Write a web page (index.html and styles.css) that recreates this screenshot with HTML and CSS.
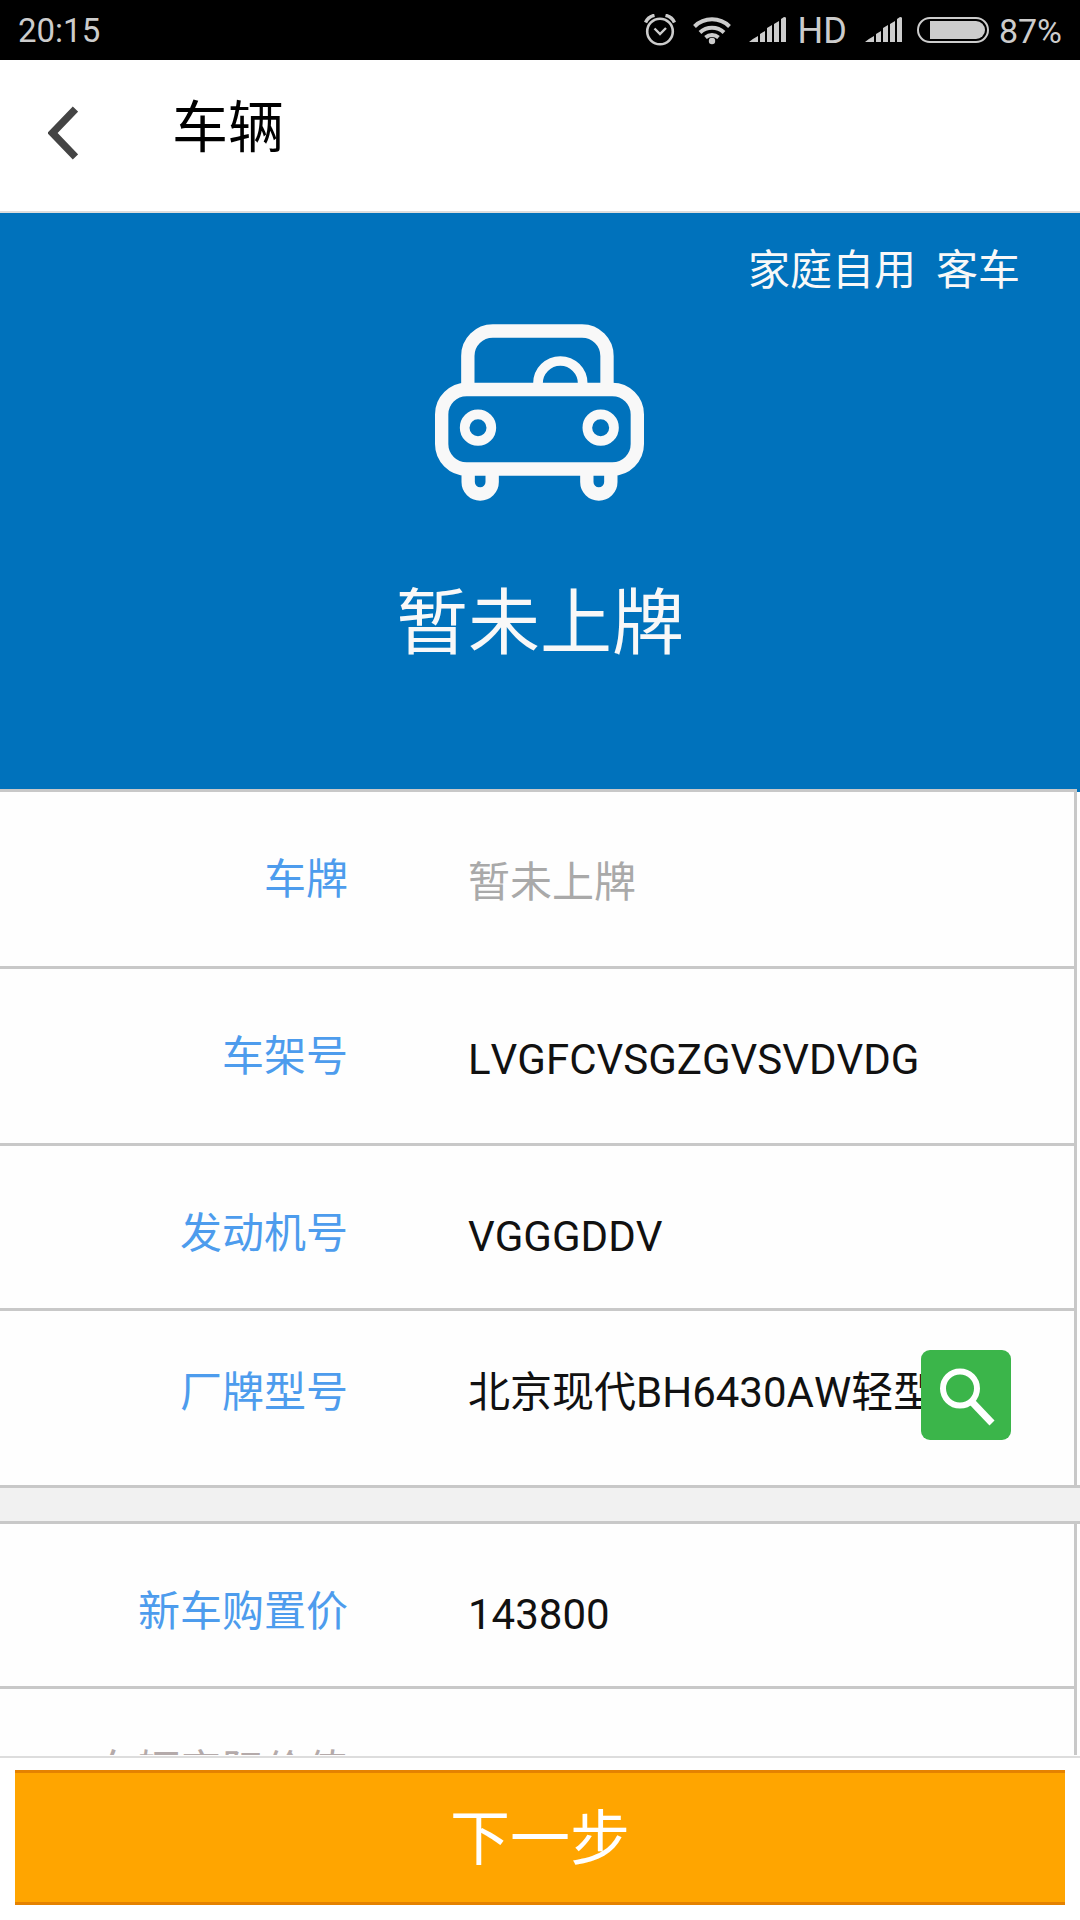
FILE: index.html
```html
<!DOCTYPE html>
<html lang="zh-CN">
<head>
<meta charset="utf-8">
<meta name="viewport" content="width=device-width">
<title>车辆</title>
<link rel="stylesheet" href="styles.css">
</head>
<body>
<div class="status">
  <span class="status-text time">20:15</span>
  <div class="status-icons">
    <svg class="alarm" viewBox="0 0 32 32" width="32" height="32" fill="none" stroke="currentColor" stroke-width="2.6"><circle cx="16" cy="17.500" r="12.800"/><path d="M10.500 14.500l5.500 5.500 6-6" stroke-width="2.400"/><path d="M1.500 8.500C3 5 6.500 2.200 10.500 1.300M21.500 1.300C25.500 2.200 29 5 30.500 8.500" stroke-width="3.400"/></svg>
    <svg class="wifi" viewBox="0 0 38 30" width="38" height="30" fill="none" stroke="currentColor" stroke-width="4"><path d="M1.500 11.500a25 25 0 0 1 35 0M7 17.500a17.500 17.500 0 0 1 24 0M12.500 22.500a10 10 0 0 1 13 0"/><circle cx="19" cy="26" r="3.200" fill="currentColor" stroke="none"/></svg>
    <svg class="signal" viewBox="0 0 37 26" width="37" height="26" fill="currentColor"><path d="M0 25Q5 21 9 19V25ZM11 17l5-3V25h-5ZM18 11l5-3V25h-5ZM25 7l5-3V25h-5ZM32 2l3-2q2 0 2 1V25h-5Z"/></svg>
    <span class="status-text hd">HD</span>
    <svg class="signal" viewBox="0 0 37 26" width="37" height="26" fill="currentColor"><path d="M0 25Q5 21 9 19V25ZM11 17l5-3V25h-5ZM18 11l5-3V25h-5ZM25 7l5-3V25h-5ZM32 2l3-2q2 0 2 1V25h-5Z"/></svg>
    <svg class="battery" viewBox="0 0 72 26" width="72" height="26"><rect x="1" y="1" width="70" height="24" rx="12" fill="none" stroke="currentColor" stroke-width="2"/><path d="M13 4H59a9 9 0 0 1 0 18H13Z" fill="currentColor"/></svg>
    <span class="status-text">87%</span>
  </div>
</div>
<header class="header">
  <button class="back" type="button" aria-label="返回">
    <svg viewBox="0 0 30 54" width="30" height="54" fill="none" stroke="#444" stroke-width="7.500"><path d="M27.500 3L4.500 27l23 24"/></svg>
  </button>
  <h1 class="title">车辆</h1>
</header>
<form class="page">
  <main class="content">
    <section class="hero">
      <div class="usage"><span>家庭自用</span><span>客车</span></div>
      <svg class="car" viewBox="0 0 720 660" width="240" height="220" fill="none" stroke="#f8f8f8" stroke-width="40">
        <rect x="65" y="268.500" width="587" height="238.500" rx="75"/>
        <path d="M143.500 268V168a75 75 0 0 1 75-75H486a75 75 0 0 1 75 75V268"/>
        <path d="M354 250a67 67 0 0 1 134 0" stroke-width="29"/>
        <circle cx="174" cy="383" r="40" stroke-width="29"/>
        <circle cx="542" cy="383" r="40" stroke-width="29"/>
        <path d="M144.500 510V546a36 36 0 0 0 72 0V510M500.500 510V546a36 36 0 0 0 72 0V510"/>
      </svg>
      <p class="plate">暂未上牌</p>
    </section>
    <section class="group first">
      <div class="row tall">
        <label for="plate">车牌</label>
        <input id="plate" type="text" placeholder="暂未上牌">
      </div>
      <div class="row tall">
        <label for="vin">车架号</label>
        <input id="vin" type="text" value="LVGFCVSGZGVSVDVDG">
      </div>
      <div class="row">
        <label for="engine">发动机号</label>
        <input id="engine" type="text" value="VGGGDDV">
      </div>
      <div class="row tall raised">
        <label for="model">厂牌型号</label>
        <input id="model" class="model" type="text" value="北京现代BH6430AW轻型">
        <button class="search" type="button" aria-label="搜索">
          <svg viewBox="0 0 90 90" width="90" height="90" fill="none" stroke="#fff" stroke-width="6"><circle cx="39" cy="38.500" r="17"/><path d="M51 52L71 73" stroke-width="7"/></svg>
        </button>
      </div>
    </section>
    <section class="group">
      <div class="row">
        <label for="price">新车购置价</label>
        <input id="price" type="text" value="143800">
      </div>
      <div class="row tall raised">
        <label class="muted" for="actual">车辆实际价值</label>
        <input id="actual" type="text">
      </div>
    </section>
  </main>
  <footer class="footer">
    <button class="next" type="submit">下一步</button>
  </footer>
</form>
</body>
</html>
```
FILE: styles.css
```css
* {
  box-sizing: border-box;
}

body {
  margin: 0;
  height: 100vh;
  display: flex;
  flex-direction: column;
  overflow: hidden;
  background: #fefefe;
  color: #111;
  font-family: Roboto, "Noto Sans CJK SC", sans-serif;
  font-size: 42px;
  font-kerning: none;
}

button,
input {
  margin: 0;
  padding: 0;
  border: 0;
  border-radius: 0;
  background: none;
  color: inherit;
  font: inherit;
  font-kerning: none;
}

svg {
  display: block;
}

.status {
  display: flex;
  justify-content: space-between;
  align-items: center;
  flex: none;
  height: 60px;
  padding: 0 18px;
  background: #000;
  color: #ccc;
}

.status-text {
  font-size: 34px;
  line-height: 40px;
  padding-top: 2px;
}

.status .time {
  font-size: 33px;
}

.status .hd {
  margin-left: 12px;
  font-size: 36px;
}

.status-icons {
  display: flex;
  align-items: center;
}

.wifi {
  margin-left: 17px;
}

.signal {
  margin-left: 18px;
}

.battery {
  margin: 0 10px 0 15px;
}

.header {
  display: flex;
  align-items: flex-start;
  flex: none;
  height: 153px;
  border-bottom: 2px solid #ddd;
  background: #fff;
}

.back {
  padding: 46px 48px;
}

.title {
  margin: 28px 0 0 46px;
  color: #000;
  font-size: 56px;
  font-weight: 400;
  line-height: 80px;
}

.page {
  display: flex;
  flex-direction: column;
  flex: 1;
  min-height: 0;
}

.content {
  flex: 1;
  min-height: 0;
  margin-bottom: 1px;
  overflow: hidden;
}

.hero {
  display: flex;
  flex-direction: column;
  align-items: center;
  padding: 29px 60px 118px;
  background: #0072bc linear-gradient(#c8c8c8, #c8c8c8) left -3px bottom 0 / 100% 3px no-repeat;
  color: #f8f8f8;
}

.usage {
  display: flex;
  gap: 20px;
  align-self: flex-end;
  line-height: 58px;
}

.plate {
  margin: 54px 0 0;
  font-size: 72px;
  line-height: 100px;
}

.car {
  flex: none;
}

.group {
  background: linear-gradient(#c8c8c8, #c8c8c8) right 3px top 0 / 3px 100% no-repeat;
  border-top: 3px solid #c8c8c8;
}

.first {
  margin-bottom: 33px;
  border-top: 0;
  border-bottom: 3px solid #c8c8c8;
  box-shadow: 0 33px #f1f1f1;
}

.row {
  position: relative;
  display: grid;
  grid-template-columns: 348px 1fr;
  column-gap: 120px;
  align-items: start;
  min-height: 162px;
  margin-right: 6px;
  padding: 58px 60px 0 0;
  line-height: 60px;
}

.row + .row {
  border-top: 3px solid #c8c8c8;
}

.tall {
  min-height: 177px;
}

.raised {
  padding-top: 52px;
}

.first .tall:first-child {
  min-height: 174px;
}

.row:nth-child(3) {
  min-height: 165px;
}

.row label {
  color: #4d9ced;
  text-align: right;
}

.row .muted {
  color: #b4aaaa;
}

.row input {
  width: 100%;
  height: 60px;
  margin-top: 3px;
  outline: 0;
}

.row .model {
  margin-top: 0;
}

.row input::placeholder {
  color: #a9a9a9;
  opacity: 1;
}

.search {
  position: absolute;
  top: 39px;
  right: 63px;
  width: 90px;
  height: 90px;
  border-radius: 9px;
  background: #3bb54a;
}

.footer {
  flex: none;
  padding: 12px 15px 15px;
  border-top: 2px solid #ddd;
  background: #fff;
}

.next {
  display: block;
  width: 100%;
  height: 135px;
  padding-bottom: 8px;
  border: solid #e58200;
  border-width: 3px 0;
  background: #ffa500;
  color: #fff;
  font-size: 60px;
}
```
